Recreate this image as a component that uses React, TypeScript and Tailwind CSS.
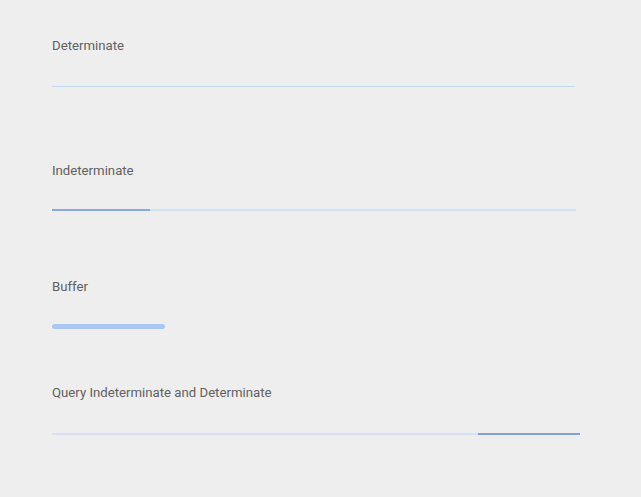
import React from 'react';

const Label: React.FC<{ text: string }> = ({ text }) => (
    <p className="text-[13.2px] leading-[16px] text-[#616161]">{text}</p>
);

export default function App() {
    return (
        <div className="w-[641px] h-[497px] bg-[#eeeeee] pl-[52px] pt-[38px] font-['Roboto',sans-serif] flex flex-col">
            {/* Determinate */}
            <Label text="Determinate" />
            <div className="mt-[32px] w-[523px] h-px bg-[#c6d8ef]" />

            {/* Indeterminate */}
            <div className="mt-[76px]">
                <Label text="Indeterminate" />
            </div>
            <div className="mt-[30px] w-[524px] h-[2px] bg-[#d3e1f2] flex">
                <div className="w-[98px] h-full bg-[#86a9e2]" />
            </div>

            {/* Buffer */}
            <div className="mt-[68px]">
                <Label text="Buffer" />
            </div>
            <div className="mt-[29px] w-[113px] h-[5px] rounded-full bg-[#a9c7f1]" />

            {/* Query */}
            <div className="mt-[56px]">
                <Label text="Query Indeterminate and Determinate" />
            </div>
            <div className="mt-[32px] w-[528px] h-[2px] bg-[#d6e2f1] flex justify-end">
                <div className="w-[102px] h-full bg-[#7fa2dc]" />
            </div>
        </div>
    );
}
